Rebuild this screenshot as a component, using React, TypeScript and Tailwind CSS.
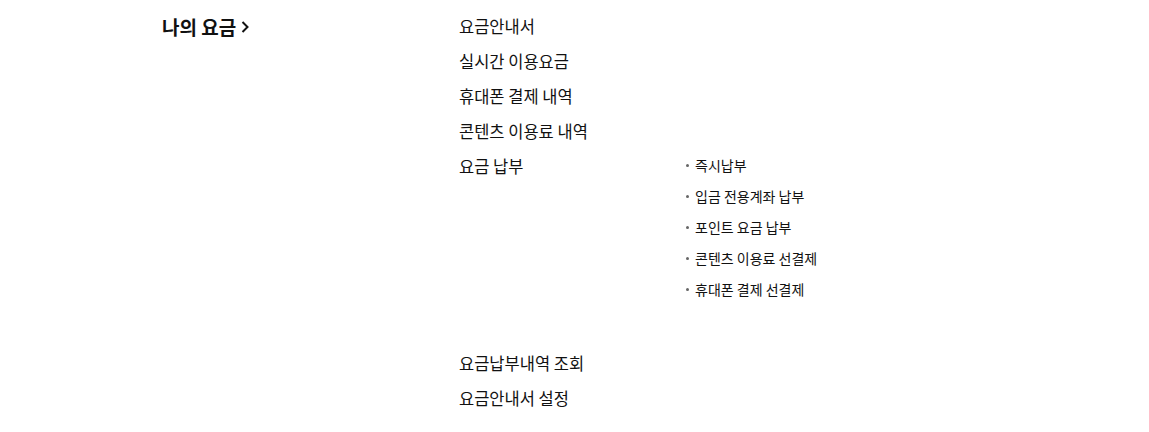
const payItems = ["즉시납부", "입금 전용계좌 납부", "포인트 요금 납부", "콘텐츠 이용료 선결제", "휴대폰 결제 선결제"];

const menu = [
  { label: "요금안내서" },
  { label: "실시간 이용요금" },
  { label: "휴대폰 결제 내역" },
  { label: "콘텐츠 이용료 내역" },
  { label: "요금 납부", sub: payItems },
  { label: "요금납부내역 조회" },
  { label: "요금안내서 설정" },
];

export default function App() {
  return (
    <div
      className="w-[1149px] h-[432px] bg-white text-[#111] overflow-hidden"
      style={{ fontFamily: '"Noto Sans CJK KR", "Noto Sans", sans-serif' }}
    >
      <div className="flex pl-[162px] pt-[9px]">
        {/* Title */}
        <div className="w-[297px] shrink-0">
          <h2 className="flex items-center gap-[5px] text-[19px] font-bold leading-[35px]">
            나의 요금
            <svg width="8" height="12" viewBox="0 0 8 12" fill="none" className="mt-[1px]">
              <path d="M1.5 1l5 5-5 5" stroke="#111" strokeWidth="2" />
            </svg>
          </h2>
        </div>

        {/* Menu */}
        <ul>
          {menu.map((m) => (
            <li key={m.label} className={`flex ${m.sub ? "mb-[41px]" : ""}`}>
              <span className="w-[227px] shrink-0 text-[16.5px] leading-[35px]">{m.label}</span>
              {m.sub && (
                <ul className="pt-[1px]">
                  {m.sub.map((s) => (
                    <li key={s} className="flex items-center text-[14px] leading-[31px]">
                      <span className="w-[3px] h-[3px] rounded-full bg-[#666] mr-[6px]" />
                      {s}
                    </li>
                  ))}
                </ul>
              )}
            </li>
          ))}
        </ul>
      </div>
    </div>
  );
}
